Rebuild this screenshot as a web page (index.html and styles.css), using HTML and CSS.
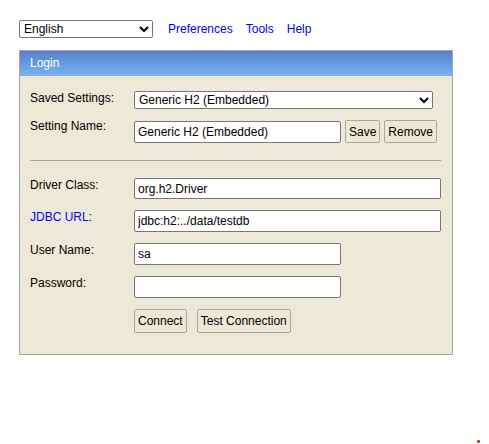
FILE: index.html
```html
<!DOCTYPE html>
<html lang="en">
<head>
<meta charset="utf-8">
<title>H2 Console</title>
<link rel="stylesheet" href="styles.css">
</head>
<body>
<div class="page">
  <div class="topbar">
    <select class="lang">
      <option>English</option>
    </select>
    <a class="toplink" href="#">Preferences</a>
    <a class="toplink" href="#">Tools</a>
    <a class="toplink" href="#">Help</a>
  </div>

  <div class="panel">
    <div class="panel-head">Login</div>
    <div class="panel-body">
      <div class="form">
        <label class="lbl">Saved Settings:</label>
        <div class="field">
          <select class="saved">
            <option>Generic H2 (Embedded)</option>
          </select>
        </div>

        <label class="lbl lbl-raised">Setting Name:</label>
        <div class="field field-row">
          <input class="inp inp-short" type="text" value="Generic H2 (Embedded)">
          <button class="btn">Save</button>
          <button class="btn">Remove</button>
        </div>

        <div class="sep"></div>

        <label class="lbl">Driver Class:</label>
        <div class="field">
          <input class="inp inp-long inp-thin" type="text" value="org.h2.Driver">
        </div>

        <label class="lbl"><a class="jdbc" href="#">JDBC URL</a>:</label>
        <div class="field">
          <input class="inp inp-long" type="text" value="jdbc:h2:../data/testdb">
        </div>

        <label class="lbl">User Name:</label>
        <div class="field">
          <input class="inp inp-short" type="text" value="sa">
        </div>

        <label class="lbl">Password:</label>
        <div class="field">
          <input class="inp inp-short" type="password" value="">
        </div>

        <div class="spacer"></div>
        <div class="field actions">
          <button class="btn btn-tall">Connect</button>
          <button class="btn btn-tall">Test Connection</button>
        </div>
      </div>
    </div>
  </div>
</div>
<div class="dot"></div>
</body>
</html>
```

FILE: styles.css
```css
html, body {
  margin: 0;
  padding: 0;
  background: #ffffff;
}

body {
  font-family: "Liberation Sans", Arial, sans-serif;
  font-size: 12px;
  color: #000000;
  position: relative;
  width: 489px;
  height: 444px;
  overflow: hidden;
}

.page {
  padding: 20px 0 0 19px;
}

.topbar {
  display: flex;
  align-items: center;
  gap: 13px;
  height: 18px;
}

.lang {
  width: 134px;
  height: 18px;
  margin-right: 2px;
  font-family: "Liberation Sans", Arial, sans-serif;
  font-size: 12px;
  color: #000;
  background: #fff;
  border: 1px solid #767676;
  border-radius: 2px;
  padding: 0;
}

.toplink {
  color: #0000ff;
  text-decoration: none;
  font-size: 12px;
  line-height: 14px;
}

.panel {
  margin-top: 12px;
  width: 434px;
  box-sizing: border-box;
  border: 1px solid #aca899;
  background: #ece9d8;
}

.panel-head {
  background: linear-gradient(#5580cb, #7bb3f3);
  color: #ffffff;
  padding: 5px 10px 6px;
  line-height: 14px;
  font-size: 12px;
}

.panel-body {
  padding: 15px 10px 21px;
}

.form {
  display: grid;
  grid-template-columns: 104px 1fr;
  row-gap: 11px;
  align-items: start;
}

.lbl {
  line-height: 14px;
  color: #000;
}

.lbl-raised {
  margin-top: -1px;
}

.jdbc {
  color: #0000ff;
  text-decoration: none;
}

.field {
  display: flex;
  align-items: center;
}

.field-row {
  gap: 4px;
}

.saved {
  width: 299px;
  height: 18px;
  font-family: "Liberation Sans", Arial, sans-serif;
  font-size: 12px;
  color: #000;
  background: #fff;
  border: 1px solid #767676;
  border-radius: 2px;
  padding: 0;
}

.inp {
  height: 22px;
  box-sizing: border-box;
  border: 1px solid #767676;
  border-radius: 2px;
  background: #fff;
  padding: 0 3px;
  font-family: "Liberation Sans", Arial, sans-serif;
  font-size: 12px;
  color: #000;
  margin: 0;
}

.inp-thin {
  height: 21px;
}

.inp-short {
  width: 207px;
}

.inp-long {
  width: 307px;
}

.btn {
  height: 23px;
  box-sizing: border-box;
  border: 1px solid #aaa99f;
  border-radius: 2px;
  background: #ece9d8;
  padding: 0 3px;
  font-family: "Liberation Sans", Arial, sans-serif;
  font-size: 12px;
  color: #000;
  margin: 0;
}

.btn-tall {
  height: 24px;
  padding-bottom: 1px;
}

.actions {
  gap: 10px;
}

.sep {
  grid-column: 1 / -1;
  height: 1px;
  background: #a9a9a9;
  width: 411px;
  margin: 6px 0 6px;
}

.spacer {
  height: 1px;
}

.dot {
  position: absolute;
  left: 477px;
  top: 440px;
  width: 3px;
  height: 3px;
  border-radius: 1px;
  background: #e8222b;
}
```
